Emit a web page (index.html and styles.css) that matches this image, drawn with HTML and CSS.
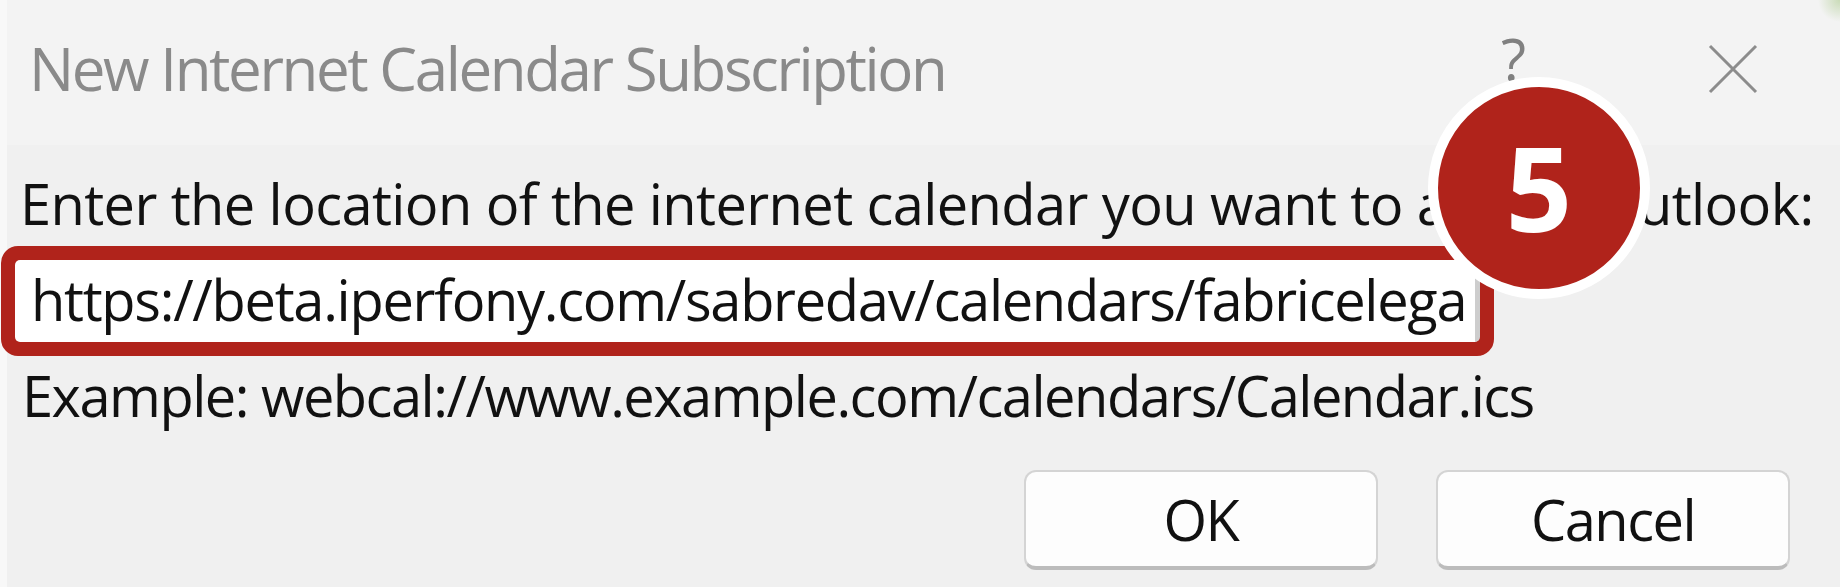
FILE: index.html
```html
<!DOCTYPE html>
<html lang="en">
<head>
  <meta charset="UTF-8">
  <title>New Internet Calendar Subscription</title>
  <link rel="stylesheet" href="styles.css">
</head>
<body>
  <div class="dialog">
    <div class="titlebar">
      <div class="title">New Internet Calendar Subscription</div>
      <div class="help">?</div>
      <div class="close">
        <svg width="52" height="52" viewBox="0 0 52 52">
          <path d="M3 3 L49 49 M49 3 L3 49" stroke="#8c8c8c" stroke-width="3" fill="none"/>
        </svg>
      </div>
    </div>

    <div class="content">
      <label class="prompt" for="url">Enter the location of the internet calendar you want to add to Outlook:</label>
      <div class="highlight">
        <input id="url" class="url" type="text" value="https://beta.iperfony.com/sabredav/calendars/fabricelegal">
      </div>
      <div class="example">Example: webcal://www.example.com/calendars/Calendar.ics</div>

      <div class="buttons">
        <button class="btn">OK</button>
        <button class="btn">Cancel</button>
      </div>
    </div>

    <div class="step">5</div>
  </div>
</body>
</html>
```

FILE: styles.css
```css
html, body {
  margin: 0;
  height: 100%;
}

body {
  background: linear-gradient(to right, #f8f8f8 7px, #f0f0f0 7px);
  font-family: "Open Sans", "Noto Sans", sans-serif;
  color: #111;
  overflow: hidden;
}

.dialog {
  position: relative;
  width: 1840px;
  height: 587px;
}

.titlebar {
  display: flex;
  align-items: flex-start;
  height: 145px;
  padding-left: 29px;
  box-sizing: border-box;
  background:
    radial-gradient(circle at 1840px 0, rgba(150, 190, 110, 0.45) 0, rgba(150, 190, 110, 0) 22px),
    linear-gradient(to right, #f8f8f8 7px, #f3f3f3 7px);
}

.title {
  flex: 1;
  margin-top: 38px;
  font-size: 60px;
  line-height: 60px;
  color: #8a8a8a;
  letter-spacing: -2.4px;
  white-space: nowrap;
}

.help {
  width: 27px;
  margin-right: 179px;
  margin-top: 30px;
  font-size: 58px;
  line-height: 58px;
  color: #808080;
}

.close {
  width: 52px;
  height: 52px;
  margin-top: 43px;
  margin-right: 81px;
}

.content {
  display: flex;
  flex-direction: column;
}

.prompt {
  margin: 30px 0 0 20px;
  font-size: 56px;
  line-height: 56px;
  font-weight: 500;
  letter-spacing: -0.6px;
  white-space: nowrap;
}

.highlight {
  width: 1493px;
  margin: 15px 0 0 1px;
  border: 14px solid #b0231b;
  border-radius: 17px;
  box-sizing: border-box;
  background: #b0231b;
}

.url {
  display: block;
  width: 100%;
  height: 82px;
  box-sizing: border-box;
  margin: 0;
  padding: 0 9px 4px 16px;
  border: none;
  border-right: 5px solid #cdcdcd;
  border-radius: 5px;
  background: #fff;
  font-family: "Open Sans", "Noto Sans", sans-serif;
  font-size: 56px;
  font-weight: 500;
  letter-spacing: -1.3px;
  color: #111;
  outline: none;
}

.example {
  margin: 13px 0 0 22px;
  font-size: 56px;
  line-height: 52px;
  font-weight: 500;
  letter-spacing: -1.5px;
  white-space: nowrap;
}

.buttons {
  display: flex;
  justify-content: flex-end;
  gap: 58px;
  margin-top: 49px;
  padding-right: 50px;
}

.btn {
  width: 354px;
  height: 100px;
  box-sizing: border-box;
  background: #fdfdfd;
  border: 2px solid #d4d4d4;
  border-bottom: 4px solid #bcbcbc;
  border-radius: 12px;
  font-family: "Open Sans", "Noto Sans", sans-serif;
  font-size: 56px;
  font-weight: 500;
  letter-spacing: -1.5px;
  color: #111;
  padding: 0;
}

.step {
  position: absolute;
  left: 1428px;
  top: 77px;
  width: 222px;
  height: 222px;
  box-sizing: border-box;
  border: 10px solid #fff;
  border-radius: 50%;
  background: #b0231b;
  color: #fff;
  font-weight: 700;
  font-size: 116px;
  line-height: 200px;
  text-align: center;
}
```
